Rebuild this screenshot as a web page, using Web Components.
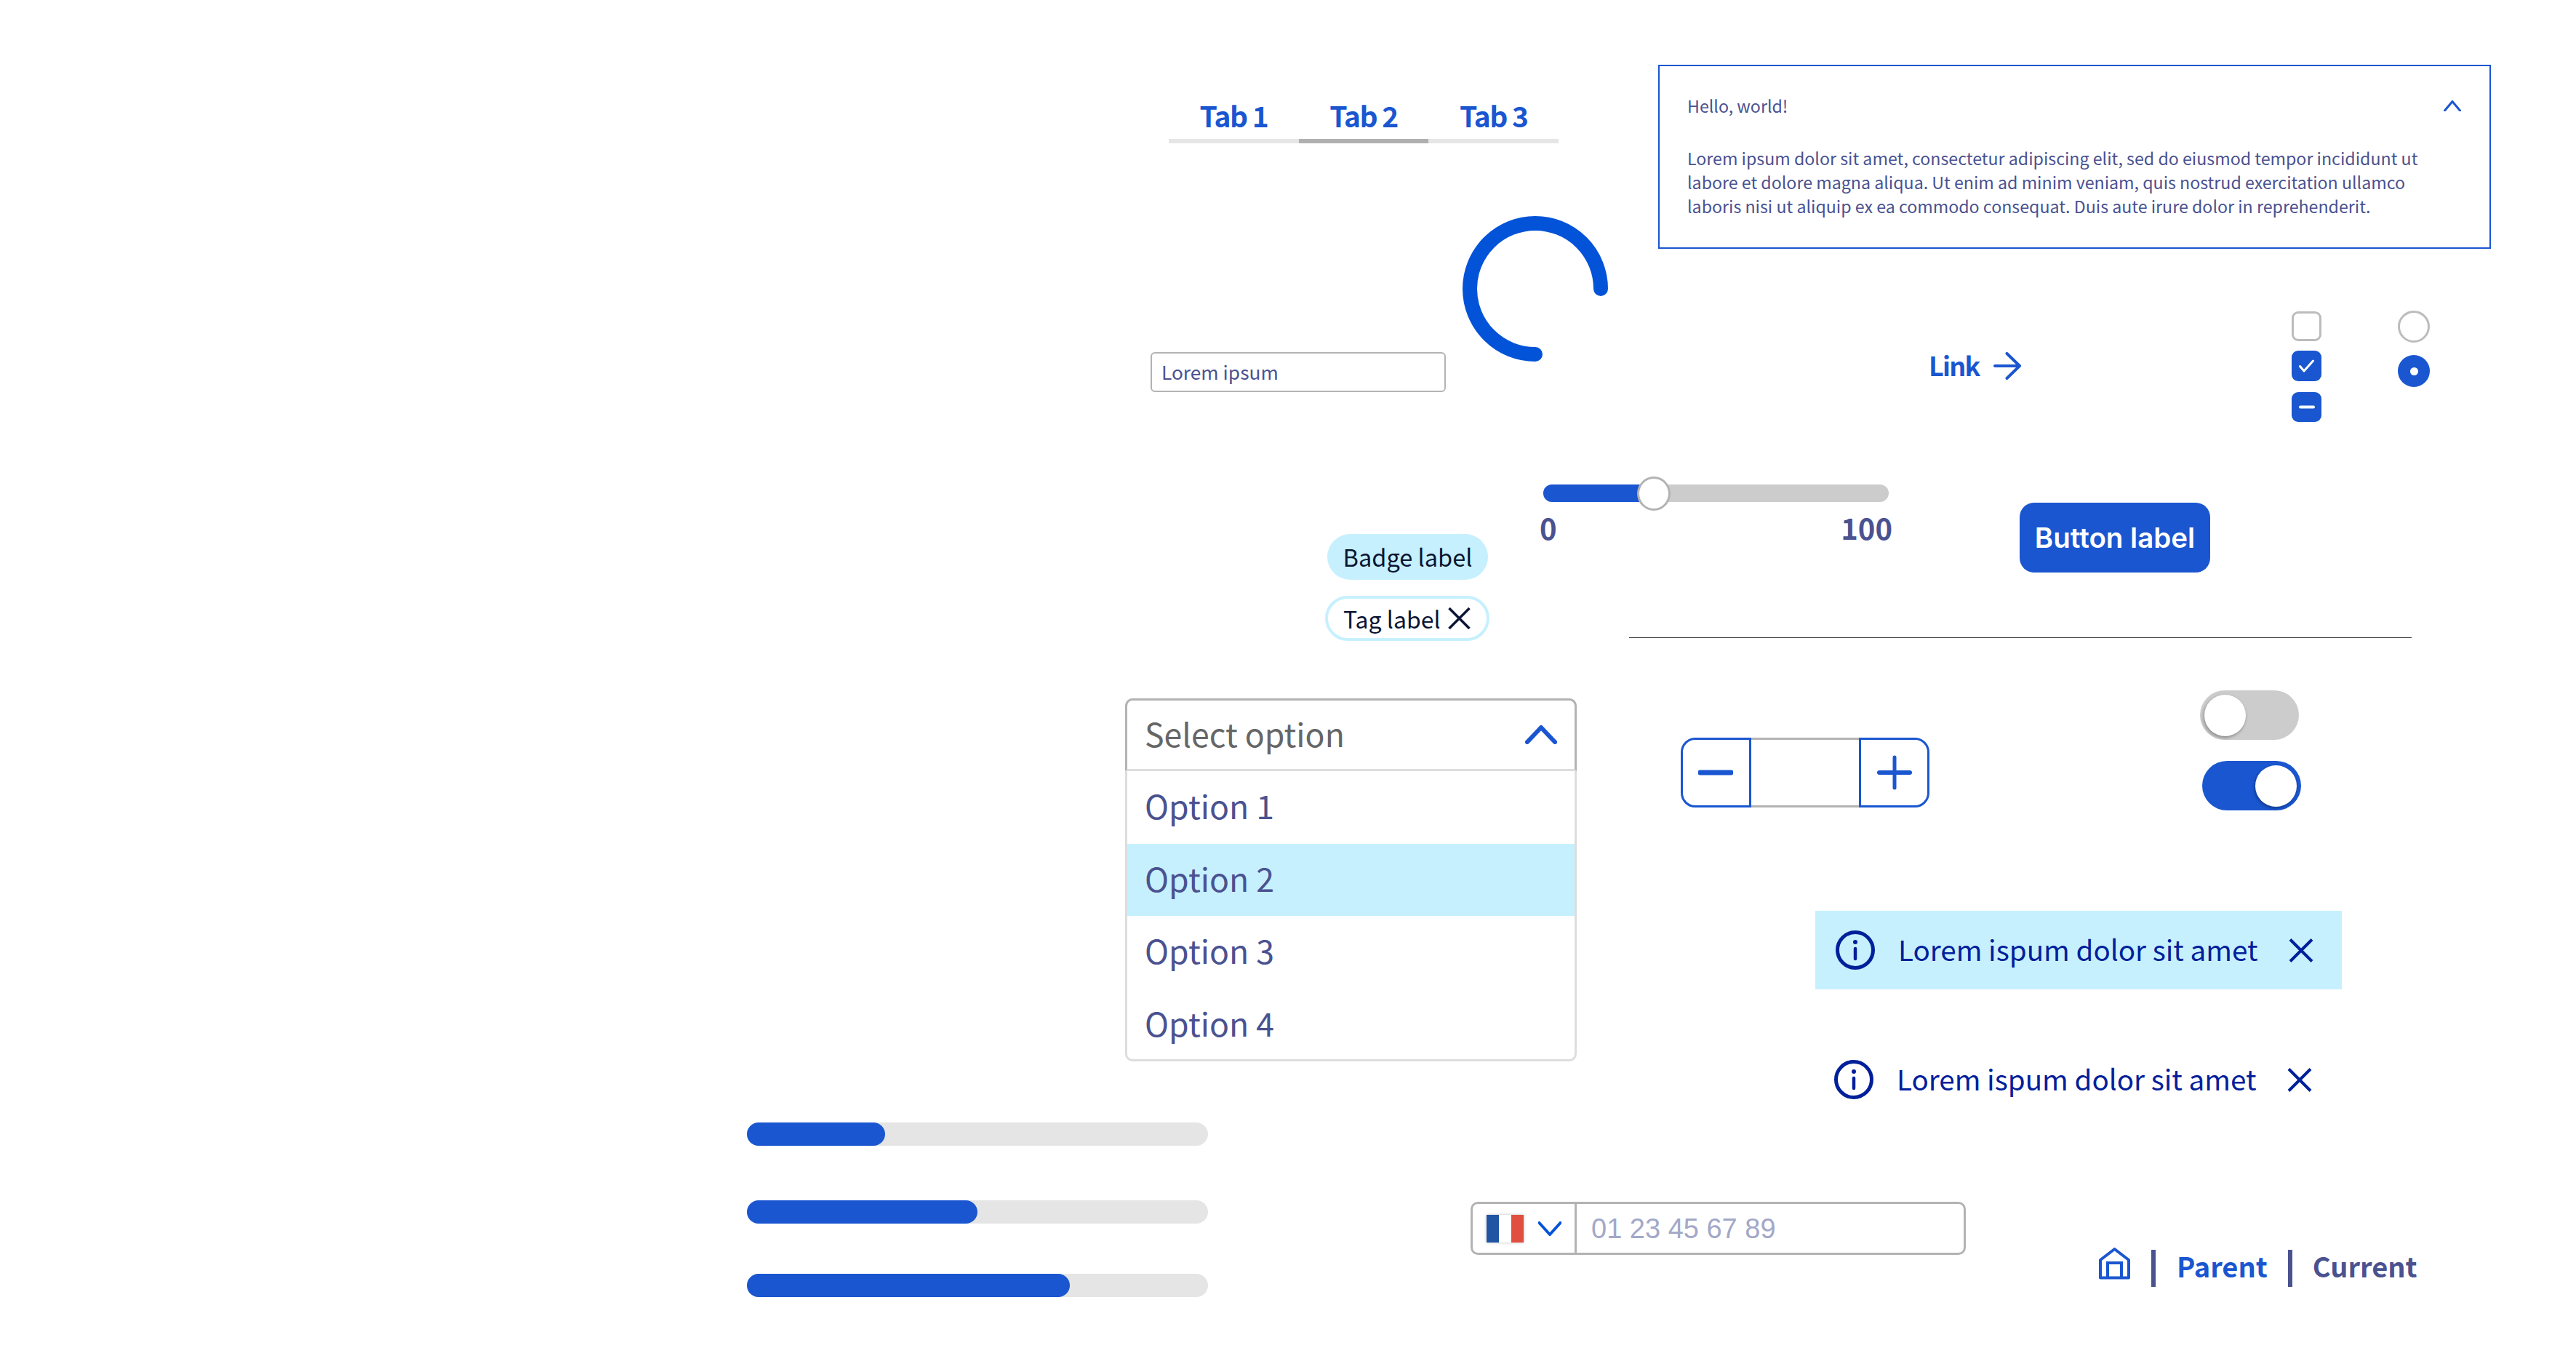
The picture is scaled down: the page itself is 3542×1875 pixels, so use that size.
<!DOCTYPE html>
<html lang="en">
<head>
<meta charset="utf-8">
<title>UI kit</title>
<style>
  html, body { margin: 0; background: #fff; }
  body { font-family: "Noto Sans CJK SC", sans-serif; width: 3542px; height: 1875px; overflow: hidden; }
  ui-sheet > section { display: flex; align-items: flex-start; }
  .row-a { padding: 89px 0 0 1582px; }
  .a-left { width: 698px; }
  .a-left ui-tabs { margin: 44px 0 0 25px; }
  .a-left-row { display: flex; align-items: flex-start; margin-top: 100px; }
  .a-left-row ui-text-input { margin-top: 187px; }
  .a-left-row ui-spinner { margin-left: 23px; }
  .a-controls { display: flex; align-items: flex-start; margin-top: 85px; }
  .a-controls ui-link { margin: 57px 0 0 372px; }
  .checks { margin: 1px 0 0 372px; }
  .checks ui-checkbox + ui-checkbox { margin-top: 13px; height: 42px; }
  .checks ui-checkbox:last-child { margin-top: 15px; height: 41px; }
  .radios { margin-left: 105px; }
  .radios ui-radio + ui-radio { margin-top: 17px; }
  .row-b { margin-top: 75px; padding-left: 1822px; }
  .b-tags { width: 295px; padding-top: 79px; }
  .b-tags ui-badge { margin-left: 3px; }
  .b-tags ui-tag { margin-top: 22px; }
  .b-top { display: flex; align-items: flex-start; }
  .b-top ui-button { margin: 36px 0 0 175px; }
  .b-rule { width: 1076px; height: 1px; background: #444; margin: 89px 0 0 123px; }
  .row-c { margin-top: 68px; padding-left: 1547px; }
  .row-c ui-select { margin-top: 11px; }
  .c-right { margin-left: 143px; }
  .c-top { display: flex; align-items: flex-start; }
  .c-top ui-stepper { margin-top: 65px; }
  .toggles { margin-left: 372px; }
  .toggles ui-toggle[on] { margin: 29px 0 0 3px; }
  .c-right ui-alert { margin: 138px 0 0 185px; }
  .c-right ui-alert[plain] { margin: 70px 0 0 183px; }
  .row-d { margin-top: 5px; padding-left: 1027px; }
  .bars { width: 634px; }
  .bars ui-progress:nth-child(2) { margin-top: 75px; }
  .bars ui-progress:nth-child(3) { margin-top: 69px; }
  .row-d ui-phone { margin: 109px 0 0 361px; }
  .row-d ui-breadcrumb { margin: 172px 0 0 183px; }
</style>
</head>
<body>
<ui-sheet>
  <section class="row-a">
    <div class="a-left">
      <ui-tabs></ui-tabs>
      <div class="a-left-row">
        <ui-text-input>Lorem ipsum</ui-text-input>
        <ui-spinner></ui-spinner>
      </div>
    </div>
    <div>
      <ui-accordion heading="Hello, world!">Lorem ipsum dolor sit amet, consectetur adipiscing elit, sed do eiusmod tempor incididunt ut labore et dolore magna aliqua. Ut enim ad minim veniam, quis nostrud exercitation ullamco laboris nisi ut aliquip ex ea commodo consequat. Duis aute irure dolor in reprehenderit.</ui-accordion>
      <div class="a-controls">
        <ui-link>Link</ui-link>
        <div class="checks">
          <ui-checkbox></ui-checkbox>
          <ui-checkbox state="checked"></ui-checkbox>
          <ui-checkbox state="mixed"></ui-checkbox>
        </div>
        <div class="radios">
          <ui-radio></ui-radio>
          <ui-radio on></ui-radio>
        </div>
      </div>
    </div>
  </section>
  <section class="row-b">
    <div class="b-tags">
      <ui-badge>Badge label</ui-badge>
      <ui-tag>Tag label</ui-tag>
    </div>
    <div>
      <div class="b-top">
        <ui-slider></ui-slider>
        <ui-button>Button label</ui-button>
      </div>
      <div class="b-rule"></div>
    </div>
  </section>
  <section class="row-c">
    <ui-select></ui-select>
    <div class="c-right">
      <div class="c-top">
        <ui-stepper></ui-stepper>
        <div class="toggles">
          <ui-toggle></ui-toggle>
          <ui-toggle on></ui-toggle>
        </div>
      </div>
      <ui-alert>Lorem ispum dolor sit amet</ui-alert>
      <ui-alert plain>Lorem ispum dolor sit amet</ui-alert>
    </div>
  </section>
  <section class="row-d">
    <div class="bars">
      <ui-progress value="30"></ui-progress>
      <ui-progress value="50"></ui-progress>
      <ui-progress value="70"></ui-progress>
    </div>
    <ui-phone></ui-phone>
    <ui-breadcrumb></ui-breadcrumb>
  </section>
</ui-sheet>

<script>
const BLUE = '#1a56d0';
const INK = '#4a5290';
const SKY = '#c7f0fe';
const NAVY = '#00209a';
const SANS = '"Noto Sans CJK SC", sans-serif';

// Every element only differs by its styles and markup
class UiElement extends HTMLElement {
  constructor() {
    super();
    this.attachShadow({ mode: 'open' });
  }

  connectedCallback() {
    this.shadowRoot.innerHTML = `<style>${this.styles()}</style>${this.markup()}`;
  }

  styles() { return ':host { display: block; }'; }
  markup() { return '<slot></slot>'; }
}

class UiSheet extends UiElement {}

class UiTabs extends UiElement {
  styles() {
    return `
      :host { display: flex; width: 536px; font: 700 39px/50px ${SANS}; letter-spacing: -1.6px; color: ${BLUE}; }
      div { flex: 1; height: 50px; padding-bottom: 8px; text-align: center; border-bottom: 6px solid #e6e6e6; }
      .active { border-bottom-color: #b0b0b0; }
    `;
  }
  markup() {
    return '<div>Tab 1</div><div class="active">Tab 2</div><div>Tab 3</div>';
  }
}

class UiTextInput extends UiElement {
  styles() {
    return `
      :host { display: flex; align-items: center; box-sizing: border-box; width: 406px; height: 55px; padding: 0 13px;
        border: 2px solid #b3b3b3; border-radius: 6px; font: 400 26.3px/1 ${SANS}; color: ${INK}; }
    `;
  }
}

class UiSpinner extends UiElement {
  styles() { return ':host { display: block; width: 200px; height: 200px; } svg { display: block; }'; }
  markup() {
    return `<svg width="200" height="200" viewBox="0 0 200 200" fill="none">
      <path d="M190 100A90 90 0 1 0 100 190" stroke="#0353d9" stroke-width="20" stroke-linecap="round"/>
    </svg>`;
  }
}

class UiAccordion extends UiElement {
  styles() {
    return `
      :host { display: block; box-sizing: border-box; width: 1145px; height: 253px; padding: 38px 38px 0; border: 2px solid ${BLUE};
        font: 400 23.2px/33px ${SANS}; color: ${INK}; }
      header { display: flex; justify-content: space-between; align-items: center; height: 33px; }
      svg { display: block; margin-right: 1px; }
      p { margin: 39px 0 0; width: 1040px; }
    `;
  }
  markup() {
    return `<header>${this.getAttribute('heading')}
      <svg width="24" height="15" viewBox="0 0 24 15" fill="none"><path d="M1.5 14L12 1.5 22.5 14" stroke="${BLUE}" stroke-width="3" stroke-linecap="round" stroke-linejoin="round"/></svg>
    </header><p><slot></slot></p>`;
  }
}

class UiLink extends UiElement {
  styles() {
    return `
      :host { display: flex; align-items: center; justify-content: space-between; width: 127px; height: 38px;
        font: 700 36px/34px ${SANS}; letter-spacing: -1.8px; color: ${BLUE}; }
      span { padding-bottom: 4px; }
      svg { display: block; }
    `;
  }
  markup() {
    return `<span><slot></slot></span><svg width="38" height="38" viewBox="0 0 38 38" fill="none">
      <path d="M2 19H36M18.5 2L36 19 18.5 36" stroke="${BLUE}" stroke-width="4" stroke-linecap="round" stroke-linejoin="round"/>
    </svg>`;
  }
}

class UiCheckbox extends UiElement {
  styles() {
    return `
      :host { display: block; box-sizing: border-box; width: 41px; height: 41px; border-radius: 9px; border: 3px solid #bcbcbc; }
      :host([state]) { background: ${BLUE}; border: 0; }
      svg { display: block; }
    `;
  }
  markup() {
    const state = this.getAttribute('state');
    if (state === 'checked') {
      return `<svg width="41" height="41" viewBox="0 0 41 41" fill="none"><path d="M11.5 21.5L17 28 29.5 14" stroke="#fff" stroke-width="3" stroke-linecap="round" stroke-linejoin="round"/></svg>`;
    }
    if (state === 'mixed') {
      return `<svg width="41" height="41" viewBox="0 0 41 41" fill="none"><path d="M12 20.5H30" stroke="#fff" stroke-width="4" stroke-linecap="round"/></svg>`;
    }
    return '';
  }
}

class UiRadio extends UiElement {
  styles() {
    return `
      :host { display: flex; align-items: center; justify-content: center; box-sizing: border-box; width: 44px; height: 44px;
        border-radius: 50%; border: 3px solid #bcbcbc; }
      :host([on]) { background: ${BLUE}; border: 0; }
      :host([on])::after { content: ""; width: 11px; height: 11px; border-radius: 50%; background: #fff; }
    `;
  }
  markup() { return ''; }
}

class UiBadge extends UiElement {
  styles() {
    return `
      :host { display: flex; align-items: center; justify-content: center; width: 221px; height: 63px; border-radius: 32px;
        background: ${SKY}; font: 400 32.5px/1 ${SANS}; color: #0b1533; }
    `;
  }
}

class UiTag extends UiElement {
  styles() {
    return `
      :host { display: flex; align-items: center; gap: 10px; box-sizing: border-box; width: 226px; height: 62px; padding-left: 21px;
        border: 4px solid ${SKY}; border-radius: 31px; font: 400 32px/1 ${SANS}; color: #0b1533; }
      svg { display: block; }
    `;
  }
  markup() {
    return `<slot></slot><svg width="31" height="30" viewBox="0 0 31 30" fill="none"><path d="M1.5 1L29.5 29M29.5 1L1.5 29" stroke="#0b1533" stroke-width="3.5"/></svg>`;
  }
}

class UiSlider extends UiElement {
  styles() {
    return `
      :host { display: block; width: 485px; font: 700 40px/1 ${SANS}; color: ${INK}; }
      .track { position: relative; width: 475px; height: 24px; margin: 11px 0 0 5px; border-radius: 12px; background: #ccc; }
      .fill { width: 150px; height: 24px; border-radius: 12px 0 0 12px; background: ${BLUE}; }
      .thumb { position: absolute; left: 129px; top: -11px; box-sizing: border-box; width: 46px; height: 47px; border-radius: 50%;
        background: #fff; border: 3px solid #b3b3b3; }
      .ends { display: flex; justify-content: space-between; margin-top: 15px; }
    `;
  }
  markup() {
    return '<div class="track"><div class="fill"></div><div class="thumb"></div></div><div class="ends"><span>0</span><span>100</span></div>';
  }
}

class UiButton extends UiElement {
  styles() {
    return `
      :host { display: flex; align-items: center; justify-content: center; width: 262px; height: 96px; border-radius: 20px;
        background: ${BLUE}; font: 600 38.5px/1 Inter, "Liberation Sans", sans-serif; color: #fff; }
    `;
  }
}

class UiSelect extends UiElement {
  styles() {
    return `
      :host { display: block; box-sizing: border-box; width: 621px; height: 499px; border: 3px solid #ddd; border-radius: 10px;
        font: 400 44.6px/1 ${SANS}; color: ${INK}; }
      .head { display: flex; align-items: center; justify-content: space-between; box-sizing: border-box; height: 100px; margin: -3px -3px 0;
        padding: 0 24px 0 24px; border: 3px solid #b3b3b3; border-bottom: 3px solid #ddd; border-radius: 10px 10px 0 0; color: #666; }
      .head span { padding-bottom: 4px; }
      .head svg { display: block; }
      .opt { display: flex; align-items: center; box-sizing: border-box; height: 99.5px; padding: 0 0 4px 24px; }
      .opt.on { background: ${SKY}; }
    `;
  }
  markup() {
    const opts = [1, 2, 3, 4].map((n) => `<div class="opt${n === 2 ? ' on' : ''}">Option ${n}</div>`).join('');
    return `<div class="head"><span>Select option</span>
      <svg width="44" height="26" viewBox="0 0 44 26" fill="none"><path d="M3 23L22 3 41 23" stroke="${BLUE}" stroke-width="6" stroke-linecap="round" stroke-linejoin="round"/></svg>
    </div>${opts}`;
  }
}

class UiStepper extends UiElement {
  styles() {
    return `
      :host { display: flex; width: 342px; height: 96px; }
      div { box-sizing: border-box; height: 96px; }
      .btn { display: flex; align-items: center; justify-content: center; width: 97px; border: 3px solid ${BLUE}; }
      .minus { border-radius: 20px 0 0 20px; }
      .plus { border-radius: 0 20px 20px 0; }
      .mid { width: 149px; border: solid #b3b3b3; border-width: 3px 0; }
      svg { display: block; }
    `;
  }
  markup() {
    return `<div class="btn minus"><svg width="48" height="48" viewBox="0 0 48 48" fill="none"><path d="M3 24H45" stroke="${BLUE}" stroke-width="7" stroke-linecap="round"/></svg></div>
      <div class="mid"></div>
      <div class="btn plus"><svg width="48" height="48" viewBox="0 0 48 48" fill="none"><path d="M3 24H45" stroke="${BLUE}" stroke-width="6" stroke-linecap="round"/><path d="M24 3V45" stroke="${BLUE}" stroke-width="5" stroke-linecap="round"/></svg></div>`;
  }
}

class UiToggle extends UiElement {
  styles() {
    return `
      :host { display: flex; align-items: center; box-sizing: border-box; width: 136px; height: 68px; padding: 0 6px; border-radius: 34px; background: #ccc; }
      :host([on]) { justify-content: flex-end; background: ${BLUE}; }
      i { width: 57px; height: 57px; border-radius: 50%; background: #fff; box-shadow: -1px 2px 4px rgba(0, 0, 0, .35); }
    `;
  }
  markup() { return '<i></i>'; }
}

class UiAlert extends UiElement {
  styles() {
    return `
      :host { display: flex; align-items: center; box-sizing: border-box; width: 724px; height: 108px; padding-left: 28px;
        background: ${SKY}; font: 400 38.6px/1 ${SANS}; color: ${NAVY}; }
      :host([plain]) { background: none; }
      svg { display: block; flex: none; }
      span { margin: 0 42px 0 32px; padding-bottom: 4px; }
    `;
  }
  markup() {
    return `<svg width="54" height="54" viewBox="0 0 54 54" fill="none">
        <circle cx="27" cy="27" r="24.5" stroke="${NAVY}" stroke-width="5"/>
        <path d="M27 25V39" stroke="${NAVY}" stroke-width="4.5" stroke-linecap="round"/>
        <circle cx="27" cy="16" r="3" fill="${NAVY}"/>
      </svg>
      <span><slot></slot></span>
      <svg width="34" height="33" viewBox="0 0 34 33" fill="none"><path d="M2 1.5L32 31.5M32 1.5L2 31.5" stroke="${NAVY}" stroke-width="4"/></svg>`;
  }
}

class UiProgress extends UiElement {
  styles() {
    return `
      :host { display: block; height: 32px; border-radius: 16px; background: #e5e5e5; }
      div { height: 32px; border-radius: 16px; background: ${BLUE}; }
    `;
  }
  markup() { return `<div style="width:${this.getAttribute('value')}%"></div>`; }
}

class UiPhone extends UiElement {
  styles() {
    return `
      :host { display: flex; box-sizing: border-box; width: 681px; height: 73px; border: 3px solid #b3b3b3; border-radius: 10px;
        font: 400 38px/1 "Liberation Sans", Arial, sans-serif; color: #a3a8c8; }
      .country { display: flex; align-items: center; gap: 20px; box-sizing: border-box; width: 143px; padding-left: 19px; border-right: 3px solid #b3b3b3; }
      .flag { display: flex; flex: none; width: 51px; height: 38px; box-shadow: 0 0 4px rgba(0, 0, 0, .25); }
      .flag i { flex: 1; }
      .num { display: flex; align-items: center; padding-left: 20px; }
      svg { display: block; flex: none; }
    `;
  }
  markup() {
    return `<div class="country">
        <div class="flag"><i style="background:#1f55a3"></i><i style="background:#fff"></i><i style="background:#e04f3f"></i></div>
        <svg width="32" height="20" viewBox="0 0 32 20" fill="none"><path d="M1.5 2L16 18 30.5 2" stroke="#0353d9" stroke-width="4" stroke-linecap="round" stroke-linejoin="round"/></svg>
      </div>
      <div class="num">01 23 45 67 89</div>`;
  }
}

class UiBreadcrumb extends UiElement {
  styles() {
    return `
      :host { display: flex; align-items: flex-start; font: 700 38px/1 ${SANS}; color: ${INK}; }
      svg { display: block; margin-right: 29px; }
      i { width: 6px; height: 51px; margin-top: 3px; background: ${INK}; }
      span { display: block; margin-top: 6px; }
      .parent { margin: 6px 28px 0 29px; color: ${BLUE}; }
      .current { margin-left: 28px; }
    `;
  }
  markup() {
    return `<svg width="43" height="44" viewBox="0 0 43 44" fill="none">
        <path d="M2 17L21.5 2 41 17V41.5H2Z" stroke="${BLUE}" stroke-width="4" stroke-linejoin="round"/>
        <path d="M12 41V21H31V41" stroke="${BLUE}" stroke-width="4"/>
      </svg>
      <i></i><span class="parent">Parent</span><i></i><span class="current">Current</span>`;
  }
}

const elements = {
  'ui-sheet': UiSheet, 'ui-tabs': UiTabs, 'ui-text-input': UiTextInput, 'ui-spinner': UiSpinner,
  'ui-accordion': UiAccordion, 'ui-link': UiLink, 'ui-checkbox': UiCheckbox, 'ui-radio': UiRadio,
  'ui-badge': UiBadge, 'ui-tag': UiTag, 'ui-slider': UiSlider, 'ui-button': UiButton,
  'ui-select': UiSelect, 'ui-stepper': UiStepper, 'ui-toggle': UiToggle, 'ui-alert': UiAlert,
  'ui-progress': UiProgress, 'ui-phone': UiPhone, 'ui-breadcrumb': UiBreadcrumb,
};
Object.entries(elements).forEach(([name, cls]) => customElements.define(name, cls));
</script>
</body>
</html>
